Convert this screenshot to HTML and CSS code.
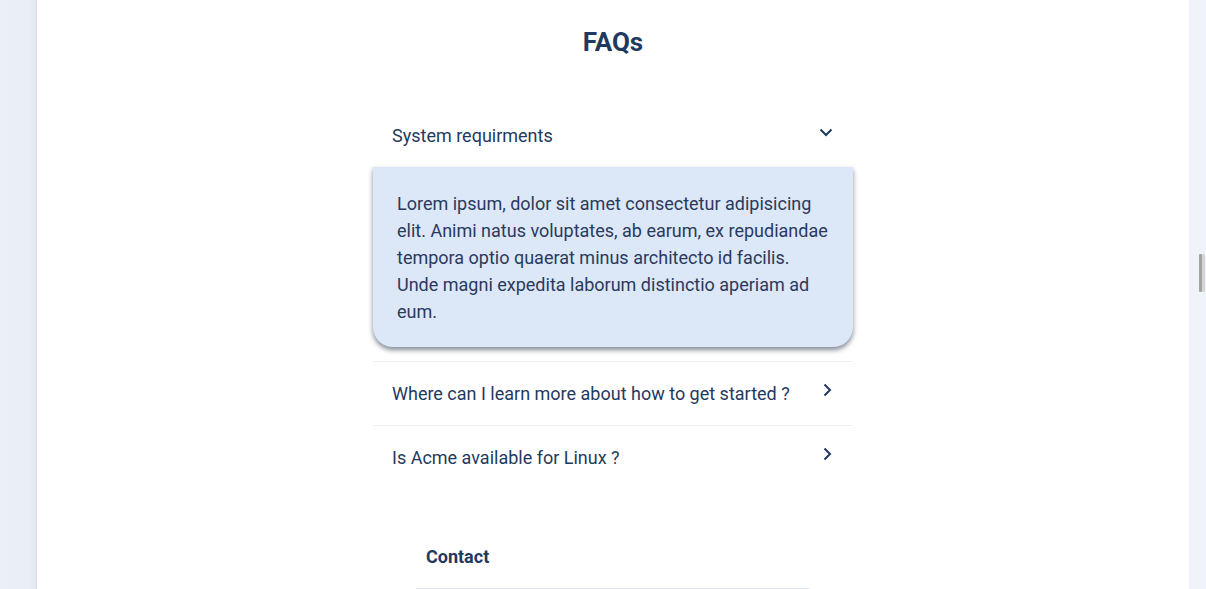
FILE: index.html
```html
<!DOCTYPE html>
<html lang="en">
<head>
<meta charset="utf-8">
<title>FAQs</title>
<link rel="stylesheet" href="styles.css">
</head>
<body>
<div class="layout">
  <aside class="sidebar"></aside>
  <main class="main">
    <h1 class="title">FAQs</h1>
    <section class="faq">
      <div class="faq-item open">
        <div class="faq-q">
          <span>System requirments</span>
          <svg class="chev" width="16" height="16" viewBox="0 0 16 16"><path d="M2.5 5.5 L8 11 L13.5 5.5" fill="none" stroke="#1f3a60" stroke-width="2"/></svg>
        </div>
        <div class="faq-a">Lorem ipsum, dolor sit amet consectetur adipisicing elit. Animi natus voluptates, ab earum, ex repudiandae tempora optio quaerat minus architecto id facilis. Unde magni expedita laborum distinctio aperiam ad eum.</div>
      </div>
      <div class="faq-item">
        <div class="faq-q">
          <span>Where can I learn more about how to get started ?</span>
          <svg class="chev" width="16" height="16" viewBox="0 0 16 16"><path d="M5.5 2.5 L11 8 L5.5 13.5" fill="none" stroke="#1f3a60" stroke-width="2"/></svg>
        </div>
      </div>
      <div class="faq-item">
        <div class="faq-q">
          <span>Is Acme available for Linux ?</span>
          <svg class="chev" width="16" height="16" viewBox="0 0 16 16"><path d="M5.5 2.5 L11 8 L5.5 13.5" fill="none" stroke="#1f3a60" stroke-width="2"/></svg>
        </div>
      </div>
    </section>
    <section class="contact">
      <h2 class="contact-title">Contact</h2>
    </section>
  </main>
  <div class="gutter"><span class="handle"></span></div>
</div>
</body>
</html>
```
FILE: styles.css
```css
* { box-sizing: border-box; }
html, body { margin: 0; padding: 0; height: 100%; overflow: hidden; }
body { font-family: Roboto, "Noto Sans", sans-serif; color: #1f3a60; background: #fff; }
.layout { display: flex; height: 589px; }
.sidebar { width: 37px; flex: none; background: linear-gradient(90deg, #ebf0f8 0%, #e9eef7 80%, #e2e8f1 100%); border-right: 1px solid #d6dbe3; }
.main { flex: 1; display: flex; flex-direction: column; align-items: center; background: #fff; }
.gutter { width: 17px; flex: none; background: #f0f3f9; position: relative; }
.handle { position: absolute; left: 10px; top: 254px; width: 3px; height: 38px; background: #a3a3a3; border-radius: 1px; box-shadow: 3px 0 0 #d4d4d4; }
.title { margin: 26px 0 0; font-size: 26px; font-weight: 700; line-height: 32px; color: #1f3a60; }
.faq { width: 480px; margin-top: 46px; }
.faq-item + .faq-item { border-top: 1px solid #f0f0f0; }
.faq-item.open + .faq-item { margin-top: 14px; }
.faq-q { height: 63px; display: flex; justify-content: space-between; align-items: center; padding: 1px 19px 0 19px; font-size: 18px; }
.faq-q span { line-height: 24px; }
.chev { margin-top: -9px; }
.faq-item.open .chev { margin-right: 0; }
.faq-item:not(.open) .chev { margin-right: -1px; }
.faq-a { background: #dce7f8; padding: 23px 24px 22px; font-size: 18px; line-height: 27px; border-radius: 0 0 20px 20px; box-shadow: 0 3px 5px rgba(50, 60, 80, 0.6); color: #2a3a5c; }
.contact { width: 394px; margin-top: 55px; border-bottom: 1px solid #e2e6f0; }
.contact-title { margin: 0; padding: 1px 10px 19px; font-size: 18px; font-weight: 700; line-height: 24px; }
```
